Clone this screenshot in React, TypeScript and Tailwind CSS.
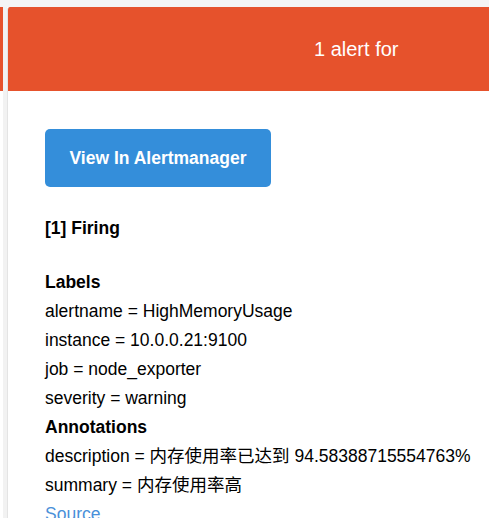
export default function App() {
  const labels = [
    "alertname = HighMemoryUsage",
    "instance = 10.0.0.21:9100",
    "job = node_exporter",
    "severity = warning",
  ]
  const annotations = [
    "description = 内存使用率已达到 94.58388715554763%",
    "summary = 内存使用率高",
  ]

  return (
    <div className="h-[525px] w-[489px] overflow-hidden bg-white font-['Liberation_Sans','Noto_Sans_CJK_SC',Arial,sans-serif] text-black">
      <div className="h-[7px] bg-[#f4f4f4]" />
      <div className="flex h-[511px]">
        {/* sliver of the previous column */}
        <div className="w-[3px] shrink-0">
          <div className="h-[84px] bg-[#e6522c]" />
        </div>
        <div className="w-[4px] shrink-0 bg-[#f2f2f2]" />

        {/* alert card */}
        <div className="min-w-0 flex-1 overflow-hidden rounded-tl-[3px] border-l border-[#e4e4e4] bg-white">
          <div className="flex h-[84px] items-center bg-[#e6522c] pl-[306px] text-[20px] whitespace-nowrap text-white">
            1 alert for
          </div>

          <div className="px-[37px] pt-[38px] text-[17.5px] leading-[29px]">
            <div className="flex h-[58px] w-[226px] items-center justify-center rounded-[5px] bg-[#348eda] font-bold text-white">
              View In Alertmanager
            </div>

            <div className="mt-[27px] font-bold">[1] Firing</div>

            <div className="mt-[25px] font-bold">Labels</div>
            {labels.map((l) => (
              <div key={l} className="whitespace-nowrap">{l}</div>
            ))}

            <div className="font-bold">Annotations</div>
            {annotations.map((a) => (
              <div key={a} className="whitespace-nowrap">{a}</div>
            ))}

            <div className="text-[#4a90d9]">Source</div>
          </div>
        </div>
      </div>
    </div>
  )
}
